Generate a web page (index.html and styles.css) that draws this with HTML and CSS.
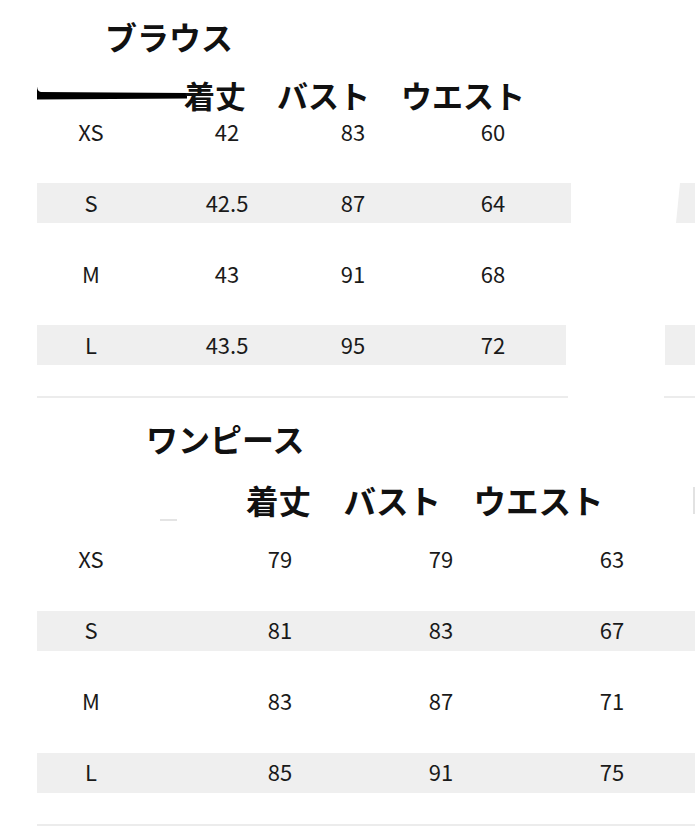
FILE: index.html
```html
<!DOCTYPE html>
<html lang="ja">
<head>
<meta charset="utf-8">
<title>サイズ表</title>
<link rel="stylesheet" href="styles.css">
</head>
<body>
<div class="page">
  <section class="chart chart-top">
    <h2 class="title title-top">ブラウス</h2>
    <div class="head head-top">
      <svg class="stroke" width="150" height="16" viewBox="0 0 150 16"><path d="M0 0.5 Q0.5 5.5 4 6 L150 7 L150 12.5 L0 13.5 Z" fill="#000"/></svg>
      <span class="head-text">着丈　バスト　ウエスト</span>
    </div>
    <div class="split">
      <div class="table table-top">
        <div class="row"><span>XS</span><span>42</span><span>83</span><span>60</span></div>
        <div class="row band"><span>S</span><span>42.5</span><span>87</span><span>64</span></div>
        <div class="row"><span>M</span><span>43</span><span>91</span><span>68</span></div>
        <div class="row band band-short"><span>L</span><span>43.5</span><span>95</span><span>72</span></div>
        <div class="rule rule-short"></div>
      </div>
      <div class="ghost">
        <div class="ghost-row"></div>
        <div class="ghost-row ghost-band ghost-slant"></div>
        <div class="ghost-row"></div>
        <div class="ghost-row ghost-band ghost-wide"></div>
        <div class="rule"></div>
      </div>
    </div>
  </section>

  <section class="chart chart-bottom">
    <h2 class="title title-bottom">ワンピース</h2>
    <div class="head head-bottom">
      <span class="tick"></span>
      <span class="head-text head-text-lg">着丈　バスト　ウエスト</span>
      <span class="edge"></span>
    </div>
    <div class="table table-bottom">
      <div class="row"><span>XS</span><span>79</span><span>79</span><span>63</span></div>
      <div class="row band"><span>S</span><span>81</span><span>83</span><span>67</span></div>
      <div class="row"><span>M</span><span>83</span><span>87</span><span>71</span></div>
      <div class="row band"><span>L</span><span>85</span><span>91</span><span>75</span></div>
      <div class="rule"></div>
    </div>
  </section>
</div>
</body>
</html>
```
FILE: styles.css
```css
html, body {
  margin: 0;
  padding: 0;
  background: #fff;
}
body {
  font-family: "Noto Sans CJK JP", "Noto Sans", sans-serif;
  color: #222;
}
.page {
  width: 695px;
  height: 832px;
  overflow: hidden;
}
.chart {
  display: flex;
  flex-direction: column;
}
.title {
  margin: 0;
  font-size: 32px;
  line-height: 40px;
  font-weight: 700;
  color: #111;
}
.title-top {
  margin-top: 16px;
  padding-left: 105px;
}
.title-bottom {
  margin-top: 20px;
  padding-left: 146px;
}
.head {
  display: flex;
  align-items: center;
  color: #111;
  font-weight: 700;
}
.head-top {
  margin-top: 22px;
  height: 34px;
  padding-left: 37px;
}
.stroke {
  display: block;
  flex: none;
  margin-top: -2px;
  margin-right: -3px;
}
.head-text {
  font-size: 31px;
  line-height: 34px;
  white-space: nowrap;
}
.head-bottom {
  margin-top: 24px;
  height: 36px;
  padding-left: 160px;
}
.head-text-lg {
  font-size: 32.5px;
  line-height: 36px;
  margin-left: 69px;
}
.tick {
  align-self: flex-end;
  width: 17px;
  height: 2px;
  margin-bottom: -3px;
  background: #e4e4e4;
  flex: none;
}
.edge {
  margin-left: auto;
  width: 2px;
  height: 27px;
  background: #e2e2e2;
  flex: none;
}
.split {
  display: flex;
}
.table {
  display: flex;
  flex-direction: column;
  gap: 31px;
}
.table-top {
  width: 534px;
  margin-left: 37px;
}
.table-bottom {
  margin-left: 37px;
  width: 658px;
  margin-top: 22px;
}
.row {
  display: grid;
  height: 40px;
  align-items: center;
  justify-items: center;
  font-size: 22px;
  line-height: 36px;
  font-weight: 400;
  color: #1a1a1a;
}
.row span {
  padding-bottom: 3px;
}
.table-bottom .row span {
  padding-bottom: 5px;
}
.table-top .row {
  grid-template-columns: 108px 164px 88px 174px;
}
.table-top .row span:last-child {
  padding-left: 18px;
}
.table-bottom .row {
  grid-template-columns: 108px 270px 52px 1fr;
}
.table-bottom .row span:last-child {
  padding-left: 62px;
}
.band {
  background: #efefef;
}
.band-short {
  margin-right: 5px;
}
.rule {
  height: 2px;
  background: #ececec;
}
.rule-short {
  margin-right: 3px;
}
.ghost {
  display: flex;
  flex-direction: column;
  gap: 31px;
  margin-left: 93px;
  width: 40px;
}
.ghost-row {
  height: 40px;
}
.ghost-band {
  background: #efefef;
}
.ghost-slant {
  margin-left: 12px;
  clip-path: polygon(4px 0, 100% 0, 100% 100%, 0 100%);
}
.ghost-wide {
  margin-left: 1px;
}
```
